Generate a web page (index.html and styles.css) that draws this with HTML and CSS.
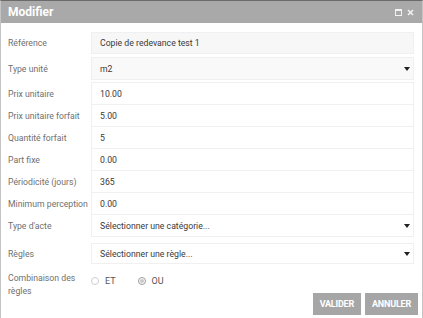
FILE: index.html
```html
<!DOCTYPE html>
<html lang="fr">
<head>
    <meta charset="UTF-8">
    <title>Modifier</title>
    <link rel="stylesheet" href="styles.css">
</head>
<body>
<div class="dialog">
    <div class="dialog-title">
        <span>Modifier</span>
        <div class="title-icons">
            <svg width="7" height="7" viewBox="0 0 7 7"><rect x="0.5" y="0.5" width="6" height="6" fill="none" stroke="#fff" stroke-width="1"/><rect x="0" y="0" width="7" height="2" fill="#fff"/></svg>
            <svg width="7" height="7" viewBox="0 0 7 7"><path d="M1 1 L6 6 M6 1 L1 6" stroke="#fff" stroke-width="1.6"/></svg>
        </div>
    </div>

    <form class="dialog-body">
        <div class="row row-ref">
            <label>Référence</label>
            <div class="field readonly">Copie de redevance test 1</div>
        </div>
        <div class="row row-unit">
            <label>Type unité</label>
            <div class="field select">m2<span class="caret"></span></div>
        </div>
        <div class="row text-row">
            <label>Prix unitaire</label>
            <div class="field">10.00</div>
        </div>
        <div class="row text-row">
            <label>Prix unitaire forfait</label>
            <div class="field">5.00</div>
        </div>
        <div class="row text-row">
            <label>Quantité forfait</label>
            <div class="field">5</div>
        </div>
        <div class="row text-row">
            <label>Part fixe</label>
            <div class="field">0.00</div>
        </div>
        <div class="row text-row">
            <label>Périodicité (jours)</label>
            <div class="field">365</div>
        </div>
        <div class="row text-row">
            <label>Minimum perception</label>
            <div class="field">0.00</div>
        </div>
        <div class="row text-row">
            <label>Type d'acte</label>
            <div class="field select">Sélectionner une catégorie...<span class="caret"></span></div>
        </div>
        <div class="row row-rules">
            <label>Règles</label>
            <div class="field select">Sélectionner une règle...<span class="caret"></span></div>
        </div>
        <div class="row row-combi">
            <label>Combinaison des règles</label>
            <div class="radios">
                <span class="radio"><span class="dot"></span>ET</span>
                <span class="radio"><span class="dot checked"></span>OU</span>
            </div>
        </div>
        <div class="actions">
            <button type="button">VALIDER</button>
            <button type="button">ANNULER</button>
        </div>
    </form>
</div>
</body>
</html>
```

FILE: styles.css
```css
* {
    margin: 0;
    padding: 0;
    box-sizing: border-box;
}

body {
    font-family: Roboto, "Liberation Sans", Arial, sans-serif;
    background-color: #fff;
    width: 423px;
    height: 318px;
    overflow: hidden;
}

.dialog {
    height: 318px;
    border-top: 1px solid #6b6b6b;
    border-left: 1px solid #c4c4c4;
    border-right: 1px solid #c4c4c4;
    display: flex;
    flex-direction: column;
}

.dialog-title {
    height: 22px;
    background-color: #a9a9a9;
    color: #fff;
    font-size: 12px;
    font-weight: bold;
    padding: 0 7px;
    display: flex;
    align-items: center;
    justify-content: space-between;
}

.title-icons {
    display: flex;
    gap: 5px;
    padding-right: 1px;
    opacity: 0.85;
}

.dialog-body {
    padding: 9px 8px 0 7px;
    font-size: 8.7px;
}

.row {
    display: grid;
    grid-template-columns: 83px 1fr;
    align-items: center;
}

.row label {
    color: #707070;
    white-space: nowrap;
}

.field {
    height: 23px;
    border: 1px solid #f0f0f0;
    background-color: #fff;
    color: #3a3a3a;
    font-size: 8.7px;
    padding: 0 8px;
    display: flex;
    align-items: center;
    position: relative;
}

.row-ref .field {
    height: 22px;
    background-color: #f7f7f7;
}

.row-ref {
    margin-bottom: 3px;
}

.row-unit {
    margin-bottom: 2px;
}

.row-unit .field {
    background-color: #f9f9f9;
}

.text-row + .text-row {
    margin-top: -1px;
}

.row-rules {
    margin-top: 6px;
}

.row-rules .field {
    height: 21px;
}

.caret {
    position: absolute;
    right: 3px;
    top: 50%;
    margin-top: -2px;
    border-left: 3px solid transparent;
    border-right: 3px solid transparent;
    border-top: 4px solid #222;
}

.row-combi {
    margin-top: 8px;
    align-items: start;
}

.row-combi label {
    line-height: 13px;
    white-space: normal;
    width: 76px;
}

.radios {
    display: flex;
    gap: 22px;
    padding-left: 0;
    padding-top: 4px;
    color: #555;
    font-size: 9px;
}

.radio {
    display: flex;
    align-items: center;
    gap: 6px;
}

.dot {
    width: 8px;
    height: 8px;
    border-radius: 50%;
    border: 1px solid #cfcfcf;
    position: relative;
}

.dot.checked {
    border-color: #9a9a9a;
}

.dot.checked::after {
    content: "";
    position: absolute;
    left: 1px;
    top: 1px;
    width: 4px;
    height: 4px;
    border-radius: 50%;
    background-color: #c8c8c8;
}

.actions {
    display: flex;
    justify-content: flex-end;
    gap: 4px;
    margin-top: -5px;
    margin-right: -4px;
}

button {
    height: 22px;
    padding: 0 7px;
    background-color: #a6a6a6;
    color: #fff;
    border: none;
    font-family: Roboto, "Liberation Sans", Arial, sans-serif;
    font-size: 9px;
    font-weight: bold;
    letter-spacing: -0.2px;
    cursor: pointer;
}

button:hover {
    background-color: #999;
}
```
